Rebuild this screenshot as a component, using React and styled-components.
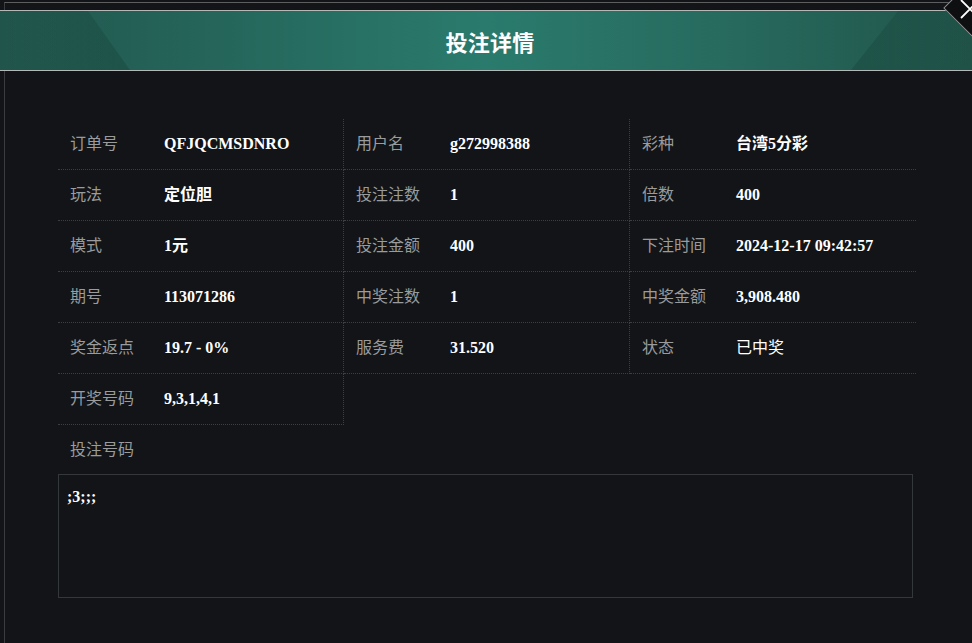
import React from "react";
import styled, { createGlobalStyle } from "styled-components";

const Global = createGlobalStyle`
  html, body { margin: 0; padding: 0; background: #121417; }
  body { font-family: "Noto Sans CJK SC", "Noto Sans", sans-serif; }
`;

const Page = styled.div`
  position: relative;
  width: 972px;
  height: 643px;
  overflow: hidden;
  background: #121417;
`;

const Frame = styled.div`
  margin: 2px 0 0 4px;
  height: 641px;
  box-sizing: border-box;
  padding-top: 7px;
  border-top: 1px solid #5c5e60;
  border-left: 1px solid #3a3c3f;
  background: linear-gradient(180deg, #141517 0px, #121417 8px);
`;

const Header = styled.div`
  position: relative;
  margin-left: -5px;
  height: 61px;
  box-sizing: border-box;
  padding-left: 8px;
  border-top: 1px solid #b4b8b7;
  border-bottom: 1px solid #b4b8b7;
  display: flex;
  align-items: center;
  justify-content: center;
  background: linear-gradient(
    90deg,
    #22574d 0%,
    #25655a 22%,
    #2a7b6d 50%,
    #27695d 76%,
    #215449 100%
  );
  &::before,
  &::after {
    content: "";
    position: absolute;
    top: 0;
    bottom: 0;
    width: 140px;
  }
  &::before {
    left: 0;
    clip-path: polygon(0 0, 88px 0, 130px 100%, 0 100%);
    background: linear-gradient(90deg, rgba(24, 70, 61, 0.1), rgba(22, 66, 58, 0.45));
  }
  &::after {
    right: 0;
    clip-path: polygon(66px 0, 100% 0, 100% 100%, 19px 100%);
    background: linear-gradient(270deg, rgba(24, 70, 61, 0.15), rgba(22, 66, 58, 0.45));
  }
`;

const Title = styled.h1`
  position: relative;
  z-index: 1;
  margin: 0;
  color: #ffffff;
  font-size: 22px;
  font-weight: 700;
  letter-spacing: 0.3px;
  font-family: "Noto Sans CJK SC", sans-serif;
`;

const CloseDiamond = styled.div`
  position: absolute;
  left: 954px;
  top: -18px;
  width: 52px;
  height: 52px;
  box-sizing: border-box;
  background: #0e0f11;
  border: 1px solid #8d8f90;
  transform: rotate(45deg);
`;

const CloseIcon = styled.svg`
  position: absolute;
  left: 959px;
  top: -2px;
  width: 22px;
  height: 22px;
`;

const Body = styled.div`
  padding: 48px 0 0 53px;
`;

const Grid = styled.div`
  display: grid;
  grid-template-columns: repeat(3, 286px);
  grid-auto-rows: 51px;
`;

const Cell = styled.div`
  display: flex;
  align-items: baseline;
  box-sizing: border-box;
  padding: 11px 0 0 12px;
  border-bottom: ${(p) => (p.$empty ? "none" : "1px dotted #3b3e42")};
  border-right: ${(p) => (p.$last || p.$empty ? "none" : "1px dotted #3b3e42")};
`;

const Label = styled.span`
  width: 94px;
  flex: none;
  color: #9a9b9c;
  font-size: 16px;
  font-family: "Noto Sans CJK SC", sans-serif;
`;

const Value = styled.span`
  color: #ffffff;
  font-size: 16px;
  font-weight: ${(p) => (p.$light ? 400 : 700)};
  font-family: "Liberation Serif", "Noto Sans CJK SC", serif;
`;

const SectionLabel = styled.div`
  height: 49px;
  box-sizing: border-box;
  padding: 0 0 3px 12px;
  display: flex;
  align-items: center;
  color: #9a9b9c;
  font-size: 16px;
  font-family: "Noto Sans CJK SC", sans-serif;
`;

const NumberBox = styled.div`
  width: 855px;
  height: 124px;
  box-sizing: border-box;
  border: 1px solid #35383b;
  padding: 13px 8px;
  color: #ffffff;
  font-size: 16px;
  font-weight: 700;
  font-family: "Liberation Serif", serif;
`;

const rows = [
  [
    ["订单号", "QFJQCMSDNRO"],
    ["用户名", "g272998388"],
    ["彩种", "台湾5分彩"],
  ],
  [
    ["玩法", "定位胆"],
    ["投注注数", "1"],
    ["倍数", "400"],
  ],
  [
    ["模式", "1元"],
    ["投注金额", "400"],
    ["下注时间", "2024-12-17 09:42:57"],
  ],
  [
    ["期号", "113071286"],
    ["中奖注数", "1"],
    ["中奖金额", "3,908.480"],
  ],
  [
    ["奖金返点", "19.7 - 0%"],
    ["服务费", "31.520"],
    ["状态", "已中奖", true],
  ],
  [["开奖号码", "9,3,1,4,1"], null, null],
];

export default function App() {
  return (
    <Page>
      <Global />
      <Frame>
        <Header>
          <Title>投注详情</Title>
        </Header>
        <Body>
          <Grid>
            {rows.flatMap((row, r) =>
              row.map((cell, c) =>
                cell ? (
                  <Cell key={`${r}-${c}`} $last={c === 2}>
                    <Label>{cell[0]}</Label>
                    <Value $light={cell[2]}>{cell[1]}</Value>
                  </Cell>
                ) : (
                  <Cell key={`${r}-${c}`} $empty />
                )
              )
            )}
          </Grid>
          <SectionLabel>投注号码</SectionLabel>
          <NumberBox>;3;;;</NumberBox>
        </Body>
      </Frame>
      <CloseDiamond />
      <CloseIcon viewBox="0 0 22 22">
        <path d="M2 2 L20 20 M2 20 L20 2" stroke="#ffffff" strokeWidth="1.8" fill="none" />
      </CloseIcon>
    </Page>
  );
}
